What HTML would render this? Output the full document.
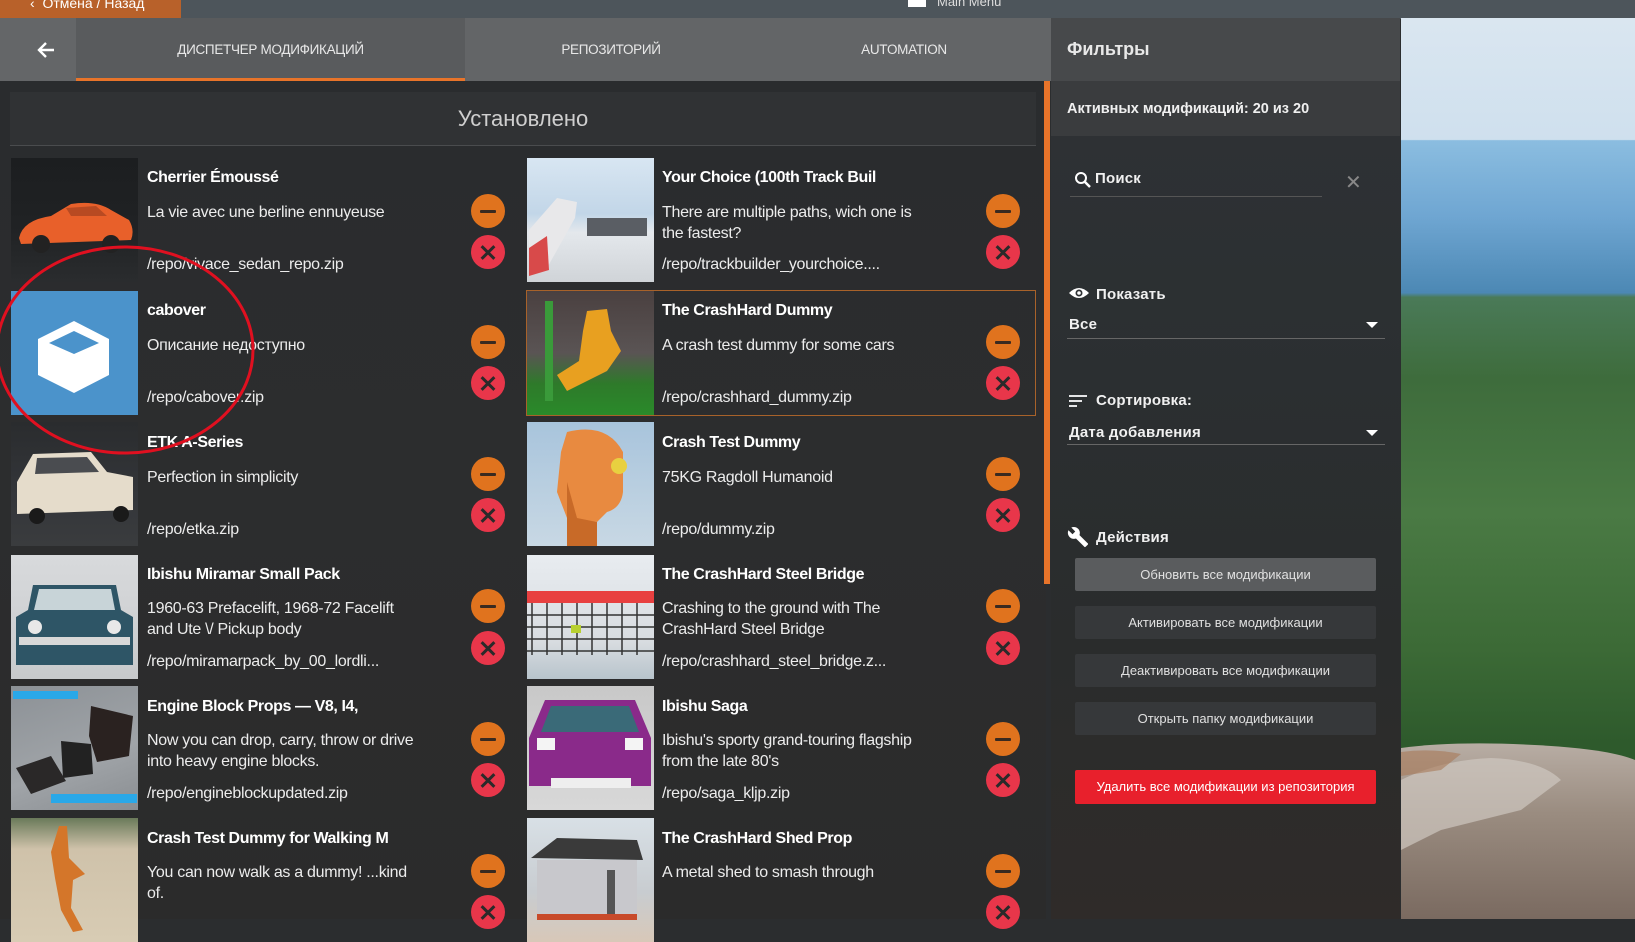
<!DOCTYPE html>
<html><head><meta charset="utf-8">
<style>
*{box-sizing:border-box;margin:0;padding:0}
body{width:1635px;height:919px;overflow:hidden;background:#2b2d2f;font-family:"Liberation Sans",sans-serif;color:#fff;position:relative}
.a{position:absolute}
.topbar{left:0;top:0;width:1635px;height:19px;background:#4d555b}
.cancel{left:0;top:0;width:181px;height:18px;background:#b8612a;color:#fff;font-size:14px;line-height:6px;padding-left:30px}
.tabs{left:0;top:18px;width:1051px;height:63px;background:#5c5e60}
.tab{top:18px;height:63px;font-size:13.5px;color:#e8e8e8;text-align:center;line-height:63px;letter-spacing:-0.3px}
.main{left:0;top:81px;width:1046px;height:838px;background:linear-gradient(180deg,#2a2c2e 0%,#2c2d2e 50%,#2b2b2b 100%)}
.card .t{position:absolute;font-weight:bold;font-size:16px;letter-spacing:-0.4px;color:#fff}
.card .d{position:absolute;font-size:16px;letter-spacing:-0.3px;color:#ececec;line-height:21px}
.btn{position:absolute;width:34px;height:34px;border-radius:50%}
.mn{background:#e0731e}
.mn::after{content:"";position:absolute;left:9px;top:15.5px;width:16px;height:3px;background:#3a2a20;border-radius:1px}
.xx{background:#e8364a}
.xx::before,.xx::after{content:"";position:absolute;left:8px;top:15.5px;width:18px;height:3px;background:#2a2a2a;transform:rotate(45deg)}
.xx::after{transform:rotate(-45deg)}
.th{position:absolute;width:127px;height:124px;overflow:hidden}
.rp{left:1051px;top:18px;width:349px;height:901px;background:linear-gradient(180deg,#2f3236 0%,#2b2f31 40%,#2a2c2c 70%,#2f2b29 100%)}
.abtn{position:absolute;left:1075px;width:301px;height:33px;background:#36383a;color:#e0e0e0;font-size:13px;text-align:center;line-height:33px;border-radius:2px}
.lbl{position:absolute;font-size:15px;color:#f0f0f0;font-weight:bold;letter-spacing:0.2px}
</style></head><body>
<div class="a topbar"></div>
<div class="a cancel">&lsaquo;&nbsp; Отмена / Назад</div>
<div class="a" style="left:908px;top:0;width:18px;height:7px;background:#fff"></div>
<div class="a" style="left:937px;top:-6px;font-size:13px;color:#ddd">Main Menu</div>

<div class="a tabs"></div>
<div class="a" style="left:0;top:18px;width:76px;height:63px;background:#646668"></div>
<svg class="a" style="left:36px;top:41px" width="20" height="18" viewBox="0 0 20 18"><path d="M18 9H3M10 2L3 9l7 7" stroke="#fff" stroke-width="2.4" fill="none"/></svg>
<div class="a" style="left:76px;top:18px;width:389px;height:63px;background:#595b5d"></div>
<div class="a" style="left:76px;top:78px;width:389px;height:3px;background:#e8742a"></div>
<div class="a tab" style="left:76px;width:389px">ДИСПЕТЧЕР МОДИФИКАЦИЙ</div>
<div class="a tab" style="left:465px;width:292px;background:#636567">РЕПОЗИТОРИЙ</div>
<div class="a tab" style="left:757px;width:294px;background:#636567">AUTOMATION</div>

<div class="a main"></div>
<div class="a" style="left:10px;top:92px;width:1026px;height:54px;background:#303234;border-bottom:1px solid #4a4c4e;text-align:center;font-size:22px;line-height:54px;color:#cfcfcf">Установлено</div>
<div class="a" style="left:1044px;top:81px;width:6px;height:503px;background:#e8742a"></div>

<div class="card">
<div class="th" style="left:11px;top:158px;background:linear-gradient(180deg,#1c1e20 0%,#202224 55%,#2a2c2e 100%)"><svg width="127" height="124"><path d="M8 80 Q12 62 40 58 L60 46 Q85 42 100 52 L118 62 Q124 72 120 82 L10 86Z" fill="#e8602a"/><circle cx="30" cy="86" r="9" fill="#222"/><circle cx="100" cy="86" r="9" fill="#222"/><path d="M55 50 L85 48 L96 58 L60 58Z" fill="#b84a22"/></svg></div>
<div class="t" style="left:147px;top:169px">Cherrier Émoussé</div>
<div class="d" style="left:147px;top:202px">La vie avec une berline ennuyeuse</div>
<div class="d" style="left:147px;top:254px">/repo/vivace_sedan_repo.zip</div>
<div class="btn mn" style="left:471px;top:194px"></div><div class="btn xx" style="left:471px;top:235px"></div>

<div class="th" style="left:11px;top:291px;background:#4b93cb"><svg width="127" height="124"><path d="M63 30 L98 48 L98 84 L63 102 L27 84 L27 48Z" fill="#fff"/><path d="M63 40 L88 52 L63 63 L38 52Z" fill="#4b93cb"/></svg></div>
<div class="t" style="left:147px;top:302px">cabover</div>
<div class="d" style="left:147px;top:335px">Описание недоступно</div>
<div class="d" style="left:147px;top:387px">/repo/cabover.zip</div>
<div class="btn mn" style="left:471px;top:325px"></div><div class="btn xx" style="left:471px;top:366px"></div>

<div class="th" style="left:11px;top:422px;background:linear-gradient(180deg,#2a2c2e 0%,#34363a 60%,#3a3c3e 100%)"><svg width="127" height="124"><path d="M6 60 L22 32 L80 30 L96 50 L122 55 L122 88 L6 92Z" fill="#e5dccb"/><path d="M26 36 L76 35 L88 50 L24 52Z" fill="#4a4c50"/><circle cx="26" cy="94" r="8" fill="#1a1a1a"/><circle cx="110" cy="92" r="8" fill="#1a1a1a"/></svg></div>
<div class="t" style="left:147px;top:434px">ETK A-Series</div>
<div class="d" style="left:147px;top:467px">Perfection in simplicity</div>
<div class="d" style="left:147px;top:519px">/repo/etka.zip</div>
<div class="btn mn" style="left:471px;top:457px"></div><div class="btn xx" style="left:471px;top:498px"></div>

<div class="th" style="left:11px;top:555px;background:linear-gradient(180deg,#d8dadc,#c8cacc)"><svg width="127" height="124"><path d="M22 30 L105 30 L110 55 L122 62 L122 110 L5 110 L5 62 L17 55Z" fill="#2e5566"/><path d="M28 34 L100 34 L104 55 L23 55Z" fill="#c8d4d8"/><rect x="8" y="82" width="111" height="8" fill="#d8d8d8"/><circle cx="24" cy="72" r="7" fill="#e8e8e8"/><circle cx="103" cy="72" r="7" fill="#e8e8e8"/></svg></div>
<div class="t" style="left:147px;top:566px">Ibishu Miramar Small Pack</div>
<div class="d" style="left:147px;top:598px">1960-63 Prefacelift, 1968-72 Facelift<br>and Ute \/ Pickup body</div>
<div class="d" style="left:147px;top:651px">/repo/miramarpack_by_00_lordli...</div>
<div class="btn mn" style="left:471px;top:589px"></div><div class="btn xx" style="left:471px;top:631px"></div>

<div class="th" style="left:11px;top:686px;background:linear-gradient(160deg,#8c9196,#a0a4a8 60%,#8a8e92)"><svg width="127" height="124"><rect x="2" y="5" width="65" height="8" fill="#2aa8e8"/><rect x="40" y="108" width="86" height="9" fill="#2aa8e8"/><path d="M80 20 L122 30 L118 70 L86 76 L78 50Z" fill="#2a2220"/><path d="M50 55 L80 58 L82 88 L52 92Z" fill="#222"/><path d="M5 82 L40 70 L55 95 L20 108Z" fill="#2a2828"/></svg></div>
<div class="t" style="left:147px;top:698px">Engine Block Props — V8, I4,</div>
<div class="d" style="left:147px;top:730px">Now you can drop, carry, throw or drive<br>into heavy engine blocks.</div>
<div class="d" style="left:147px;top:783px">/repo/engineblockupdated.zip</div>
<div class="btn mn" style="left:471px;top:722px"></div><div class="btn xx" style="left:471px;top:763px"></div>

<div class="th" style="left:11px;top:818px;background:linear-gradient(180deg,#6a7a5a 0%,#cfc2aa 25%,#d8ccb4 100%)"><svg width="127" height="124"><path d="M48 8 L56 8 L58 40 L74 56 L62 62 L60 90 L72 112 L62 114 L50 92 L44 60 L40 34Z" fill="#d4762a"/></svg></div>
<div class="t" style="left:147px;top:830px">Crash Test Dummy for Walking M</div>
<div class="d" style="left:147px;top:862px">You can now walk as a dummy! ...kind<br>of.</div>
<div class="btn mn" style="left:471px;top:854px"></div><div class="btn xx" style="left:471px;top:895px"></div>
</div>

<div class="card">
<div class="th" style="left:527px;top:158px;background:linear-gradient(180deg,#d8e6f2 0%,#c2d6e8 45%,#e4e8ec 60%,#d0d4d8 100%)"><svg width="127" height="124"><path d="M2 72 L30 40 L50 44 L48 60 L20 110 L2 112Z" fill="#e8e8ea"/><path d="M2 90 L20 78 L22 112 L2 118Z" fill="#d84a4a"/><rect x="60" y="60" width="60" height="18" fill="#5a5e64"/></svg></div>
<div class="t" style="left:662px;top:169px">Your Choice (100th Track Buil</div>
<div class="d" style="left:662px;top:202px">There are multiple paths, wich one is<br>the fastest?</div>
<div class="d" style="left:662px;top:254px">/repo/trackbuilder_yourchoice....</div>
<div class="btn mn" style="left:986px;top:194px"></div><div class="btn xx" style="left:986px;top:235px"></div>

<div class="a" style="left:526px;top:290px;width:510px;height:126px;border:1.5px solid #a8622a"></div>
<div class="th" style="left:527px;top:291px;background:linear-gradient(180deg,#4a4040 0%,#5a5454 50%,#2e7a2a 75%,#2a8a2a 100%)"><svg width="127" height="124"><rect x="18" y="10" width="8" height="100" fill="#3a9a3a"/><path d="M60 20 L80 18 L84 40 L94 60 L80 80 L60 90 L40 100 L30 84 L52 70 L56 40Z" fill="#e8a020"/></svg></div>
<div class="t" style="left:662px;top:302px">The CrashHard Dummy</div>
<div class="d" style="left:662px;top:335px">A crash test dummy for some cars</div>
<div class="d" style="left:662px;top:387px">/repo/crashhard_dummy.zip</div>
<div class="btn mn" style="left:986px;top:325px"></div><div class="btn xx" style="left:986px;top:366px"></div>

<div class="th" style="left:527px;top:422px;background:linear-gradient(180deg,#a8c4dc,#c8d8e4)"><svg width="127" height="124"><path d="M40 10 Q80 0 96 30 L96 70 Q94 86 80 90 L70 100 L40 96 L30 70 L34 30Z" fill="#e88a40"/><path d="M40 60 L50 96 L70 100 L70 124 L40 124Z" fill="#c86a28"/><circle cx="92" cy="44" r="8" fill="#e8d040"/></svg></div>
<div class="t" style="left:662px;top:434px">Crash Test Dummy</div>
<div class="d" style="left:662px;top:467px">75KG Ragdoll Humanoid</div>
<div class="d" style="left:662px;top:519px">/repo/dummy.zip</div>
<div class="btn mn" style="left:986px;top:457px"></div><div class="btn xx" style="left:986px;top:498px"></div>

<div class="th" style="left:527px;top:555px;background:linear-gradient(180deg,#e8ecf0,#d8dce0 70%,#b8c4cc)"><svg width="127" height="124"><rect x="0" y="36" width="127" height="12" fill="#e84040"/><g stroke="#333" stroke-width="1.5"><path d="M5 48 V100 M20 48 V100 M35 48 V100 M50 48 V100 M65 48 V100 M80 48 V100 M95 48 V100 M110 48 V100 M0 60 H127 M0 72 H127 M0 84 H127 M0 96 H127"/></g><rect x="44" y="70" width="10" height="8" fill="#b8d030"/></svg></div>
<div class="t" style="left:662px;top:566px">The CrashHard Steel Bridge</div>
<div class="d" style="left:662px;top:598px">Crashing to the ground with The<br>CrashHard Steel Bridge</div>
<div class="d" style="left:662px;top:651px">/repo/crashhard_steel_bridge.z...</div>
<div class="btn mn" style="left:986px;top:589px"></div><div class="btn xx" style="left:986px;top:631px"></div>

<div class="th" style="left:527px;top:686px;background:linear-gradient(180deg,#c8c8c8,#d8d8d8)"><svg width="127" height="124"><path d="M18 14 L108 14 L124 52 L124 100 L2 100 L2 52Z" fill="#8a2a8a"/><path d="M24 20 L102 20 L112 46 L14 46Z" fill="#3a6a78"/><rect x="10" y="52" width="18" height="12" fill="#f4f4f4"/><rect x="98" y="52" width="18" height="12" fill="#f4f4f4"/><rect x="24" y="92" width="80" height="10" fill="#eee"/></svg></div>
<div class="t" style="left:662px;top:698px">Ibishu Saga</div>
<div class="d" style="left:662px;top:730px">Ibishu's sporty grand-touring flagship<br>from the late 80's</div>
<div class="d" style="left:662px;top:783px">/repo/saga_kljp.zip</div>
<div class="btn mn" style="left:986px;top:722px"></div><div class="btn xx" style="left:986px;top:763px"></div>

<div class="th" style="left:527px;top:818px;background:linear-gradient(180deg,#d8e0e6,#c8ccd0 60%,#d8c8b8)"><svg width="127" height="124"><path d="M4 40 L30 20 L110 22 L116 42Z" fill="#3a3a3a"/><rect x="10" y="42" width="100" height="58" fill="#c8c8cc"/><rect x="10" y="96" width="100" height="6" fill="#c84a2a"/><rect x="80" y="52" width="8" height="44" fill="#555"/></svg></div>
<div class="t" style="left:662px;top:830px">The CrashHard Shed Prop</div>
<div class="d" style="left:662px;top:862px">A metal shed to smash through</div>
<div class="btn mn" style="left:986px;top:854px"></div><div class="btn xx" style="left:986px;top:895px"></div>
</div>

<svg class="a" style="left:0;top:240px" width="270" height="220"><ellipse cx="125" cy="110" rx="128" ry="103" fill="none" stroke="#e01020" stroke-width="3"/></svg>

<div class="a rp"></div>
<div class="a" style="left:1051px;top:18px;width:349px;height:63px;background:#47494b"></div>
<div class="a" style="left:1067px;top:39px;font-size:18px;color:#e8e8e8;font-weight:bold">Фильтры</div>
<div class="a" style="left:1051px;top:81px;width:349px;height:55px;background:#3a3c3e"></div>
<div class="a" style="left:1067px;top:101px;font-size:14.5px;color:#f0f0f0;font-weight:bold">Активных модификаций: 20 из 20</div>
<svg class="a" style="left:1074px;top:171px" width="18" height="18" viewBox="0 0 18 18"><circle cx="7" cy="7" r="5" stroke="#fff" stroke-width="2" fill="none"/><path d="M11 11 L16 16" stroke="#fff" stroke-width="2.5"/></svg>
<div class="lbl" style="left:1095px;top:170px">Поиск</div>
<div class="a" style="left:1070px;top:196px;width:252px;height:1px;background:#555"></div>
<div class="a" style="left:1345px;top:170px;font-size:20px;color:#888">✕</div>

<svg class="a" style="left:1068px;top:286px" width="22" height="14" viewBox="0 0 22 14"><path d="M1 7 Q11 -3 21 7 Q11 17 1 7Z" fill="#fff"/><circle cx="11" cy="7" r="3.5" fill="#2e3134"/><circle cx="11" cy="7" r="1.8" fill="#fff"/></svg>
<div class="lbl" style="left:1096px;top:286px">Показать</div>
<div class="lbl" style="left:1069px;top:316px">Все</div>
<div class="a" style="left:1366px;top:322px;width:0;height:0;border-left:6px solid transparent;border-right:6px solid transparent;border-top:6px solid #fff"></div>
<div class="a" style="left:1067px;top:338px;width:318px;height:1px;background:#666"></div>

<svg class="a" style="left:1068px;top:394px" width="20" height="14"><path d="M1 2H19M1 7H14M1 12H9" stroke="#fff" stroke-width="1.8"/></svg>
<div class="lbl" style="left:1096px;top:392px">Сортировка:</div>
<div class="lbl" style="left:1069px;top:424px">Дата добавления</div>
<div class="a" style="left:1366px;top:430px;width:0;height:0;border-left:6px solid transparent;border-right:6px solid transparent;border-top:6px solid #fff"></div>
<div class="a" style="left:1067px;top:444px;width:318px;height:1px;background:#666"></div>

<svg class="a" style="left:1067px;top:526px" width="22" height="22" viewBox="0 0 24 24"><path d="M22.7 19l-9.1-9.1c.9-2.3.4-5-1.5-6.9-2-2-5-2.4-7.4-1.3L9 6 6 9 1.6 4.7C.4 7.1.9 10.1 2.9 12.1c1.9 1.9 4.6 2.4 6.9 1.5l9.1 9.1c.4.4 1 .4 1.4 0l2.3-2.3c.5-.4.5-1.1.1-1.4z" fill="#fff"/></svg>
<div class="lbl" style="left:1096px;top:529px">Действия</div>
<div class="abtn" style="top:558px;background:#5a5c5e">Обновить все модификации</div>
<div class="abtn" style="top:606px">Активировать все модификации</div>
<div class="abtn" style="top:654px">Деактивировать все модификации</div>
<div class="abtn" style="top:702px">Открыть папку модификации</div>
<div class="abtn" style="top:770px;height:34px;line-height:34px;background:#e8202c;color:#fff">Удалить все модификации из репозитория</div>

<!-- landscape -->
<div class="a" style="left:1401px;top:18px;width:234px;height:901px;background:linear-gradient(180deg,#dae6f0 0%,#cfe0ee 13.5%,#8bbde0 13.6%,#6fa6d2 22%,#4c88b4 30.5%,#4a7a58 31%,#3e6c3c 40%,#4a7a44 55%,#3c6a36 70%,#2e5a2c 80.5%)"></div>
<svg class="a" style="left:1401px;top:740px" width="234" height="179" viewBox="0 0 234 179"><defs><linearGradient id="rk" x1="0" y1="0" x2="0" y2="1"><stop offset="0" stop-color="#b8ada4"/><stop offset="0.4" stop-color="#9a8c80"/><stop offset="1" stop-color="#7a6a60"/></linearGradient></defs><path d="M0 8 Q60 0 150 6 Q210 10 234 20 L234 179 L0 179Z" fill="url(#rk)"/><path d="M0 40 Q40 20 90 18 Q140 20 160 40 L120 70 L40 90 L0 110Z" fill="#cfc8c0" opacity="0.7"/><path d="M0 12 Q30 8 60 14 L40 30 L0 36Z" fill="#a87a58" opacity="0.6"/></svg>
</body></html>
